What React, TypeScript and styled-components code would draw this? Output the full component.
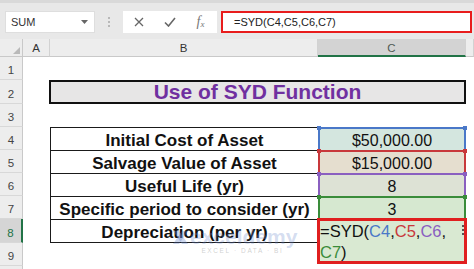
import React from "react";
import styled, { createGlobalStyle } from "styled-components";

const Global = createGlobalStyle`
  html, body { margin: 0; padding: 0; background: #fff; }
  body {
    width: 474px; height: 269px; overflow: hidden;
    font-family: "Liberation Sans", Arial, sans-serif;
  }
  #root { width: 474px; height: 269px; }
`;

const Page = styled.div`
  width: 474px;
  height: 269px;
  display: flex;
  flex-direction: column;
  position: relative;
  overflow: hidden;
`;

/* ---------- formula bar ---------- */

const Toolbar = styled.div`
  flex: none;
  height: 39px;
  box-sizing: border-box;
  background: #e8e8e8;
  border-top: 3px solid #d9d9d9;
  display: flex;
  align-items: center;
  padding: 2px 2px 0 5px;
`;

const NameBox = styled.div`
  width: 90px;
  height: 22px;
  box-sizing: border-box;
  background: #fff;
  border: 1px solid #dedede;
  display: flex;
  align-items: center;
  justify-content: space-between;
  padding: 0 6px 0 5px;
  font-size: 11px;
  color: #333;
`;

const Grip = styled.div`
  width: 28px;
  display: flex;
  flex-direction: column;
  align-items: center;
  gap: 2px;
  span {
    width: 2px;
    height: 2px;
    background: #a8a8a8;
    border-radius: 1px;
  }
`;

const FxGroup = styled.div`
  width: 94px;
  height: 22px;
  background: #fff;
  display: grid;
  grid-template-columns: repeat(3, 31px);
  align-items: center;
  justify-items: center;
  margin-right: 4px;
  color: #666;
`;

const FxText = styled.span`
  font-family: "Liberation Serif", "Times New Roman", serif;
  font-style: italic;
  font-size: 14px;
  color: #777;
  sub {
    font-size: 9px;
    vertical-align: -1px;
  }
`;

const FormulaInput = styled.div`
  flex: 1;
  height: 22px;
  box-sizing: border-box;
  background: #fff;
  border: 2px solid #e81c1c;
  display: flex;
  align-items: center;
  padding-left: 11px;
  font-size: 11px;
  color: #222;
`;

/* ---------- sheet ---------- */

const Sheet = styled.div`
  flex: 1;
  display: grid;
  grid-template-columns: 23px 27px 268px 148px 1fr;
  grid-template-rows: 18px 23px 24px 23px 23px 23px 23px 23px 24px 23px 1fr;
  background: #fff;
`;

const Corner = styled.div`
  background: #ededed;
  border-right: 1px solid #c9c9c9;
  border-bottom: 1px solid #c9c9c9;
  box-sizing: border-box;
  display: flex;
  align-items: flex-end;
  justify-content: flex-end;
  padding: 0 2px 2px 0;
`;

const ColHeader = styled.div<{ $selected?: boolean }>`
  box-sizing: border-box;
  background: ${(p) => (p.$selected ? "#d3d3d3" : "#ededed")};
  border-right: 1px solid #d2d2d2;
  border-bottom: ${(p) => (p.$selected ? "2px solid #217346" : "1px solid #c9c9c9")};
  display: flex;
  align-items: center;
  justify-content: center;
  font-size: 11.5px;
  color: ${(p) => (p.$selected ? "#4f5a54" : "#333")};
  padding-top: ${(p) => (p.$selected ? "1px" : "0")};
`;

const RowHead = styled.div<{ $selected?: boolean }>`
  box-sizing: border-box;
  background: ${(p) => (p.$selected ? "#d5d5d5" : "#ededed")};
  border-right: ${(p) => (p.$selected ? "2px solid #217346" : "1px solid #c9c9c9")};
  border-bottom: 1px solid #d8d8d8;
  display: flex;
  align-items: flex-end;
  justify-content: center;
  padding-bottom: 3px;
  font-size: 11.5px;
  line-height: 11px;
  color: ${(p) => (p.$selected ? "#217346" : "#444")};
`;

const Blank = styled.div``;

const Title = styled.div`
  grid-column: span 2;
  box-sizing: border-box;
  margin: 0 0 0 -1px;
  border: 2px solid #111;
  background: #e7e6e6;
  display: flex;
  align-items: center;
  justify-content: center;
  font-size: 21px;
  font-weight: bold;
  color: #7030a0;
`;

const Label = styled.div<{ $last?: boolean }>`
  box-sizing: border-box;
  border-left: 1px solid #1a1a1a;
  border-top: 1px solid #1a1a1a;
  border-bottom: ${(p) => (p.$last ? "1px solid #1a1a1a" : "none")};
  display: flex;
  align-items: flex-end;
  justify-content: center;
  padding-bottom: 1px;
  font-size: 17px;
  line-height: 17px;
  font-weight: bold;
  color: #111;
  white-space: nowrap;
`;

const Value = styled.div<{ $line: string; $fill: string }>`
  position: relative;
  box-sizing: border-box;
  background: ${(p) => p.$fill};
  border: 2px solid ${(p) => p.$line};
  border-bottom: none;
  display: flex;
  align-items: flex-end;
  justify-content: center;
  padding-bottom: 1px;
  font-size: 16px;
  line-height: 16px;
  color: #111;
  &::before,
  &::after {
    content: "";
    position: absolute;
    top: -3px;
    width: 4px;
    height: 4px;
    background: ${(p) => p.$line};
  }
  &::before { left: -3px; }
  &::after { right: -3px; }
`;

const EditCell = styled.div`
  position: relative;
`;

const EditBox = styled.div`
  position: absolute;
  z-index: 2;
  top: -1px;
  left: -1px;
  width: 150px;
  height: 46px;
  box-sizing: border-box;
  border: 3px solid #e01f1f;
  background: #d9e9d2;
  padding-left: 0;
  font-size: 16.5px;
  line-height: 21px;
  color: #111;
`;

const EditLine = styled.div`
  white-space: nowrap;
`;

const Ref = styled.span<{ $c: string }>`
  color: ${(p) => p.$c};
`;

const Caret = styled.div`
  position: absolute;
  right: 0px;
  top: 4px;
  height: 10px;
  border-left: 2px dotted #555;
`;

/* ---------- watermark ---------- */

const Watermark = styled.div`
  position: absolute;
  left: 172px;
  top: 226px;
  display: flex;
  flex-direction: column;
  align-items: flex-end;
  pointer-events: none;
  z-index: 1;
`;

const Brand = styled.div`
  display: flex;
  align-items: center;
  gap: 1px;
  font-size: 21px;
  font-weight: bold;
  color: rgba(110, 140, 205, 0.3);
  line-height: 22px;
`;

const Tagline = styled.div`
  font-size: 6.5px;
  letter-spacing: 1.6px;
  color: rgba(150, 150, 150, 0.45);
  margin-top: -1px;
  margin-right: 14px;
`;

const blue = "#4a78c8";
const red = "#c8383b";
const purple = "#8a5fc0";
const green = "#3a8c3a";

const rows = [
  { n: 4, label: "Initial Cost of Asset", value: "$50,000.00", line: blue, fill: "#d4e6df" },
  { n: 5, label: "Salvage Value of Asset", value: "$15,000.00", line: red, fill: "#e5decf" },
  { n: 6, label: "Useful Life (yr)", value: "8", line: purple, fill: "#dde2d5" },
  { n: 7, label: "Specific period to consider (yr)", value: "3", line: green, fill: "#d6e8d0" },
];

const CancelIcon = () => (
  <svg width="10" height="10" viewBox="0 0 10 10">
    <path d="M1 1 L9 9 M9 1 L1 9" stroke="#666" strokeWidth="1.3" fill="none" />
  </svg>
);

const EnterIcon = () => (
  <svg width="12" height="10" viewBox="0 0 12 10">
    <path d="M1 5.5 L4.5 9 L11 1" stroke="#666" strokeWidth="1.6" fill="none" />
  </svg>
);

const DropArrow = () => (
  <svg width="7" height="4" viewBox="0 0 7 4">
    <path d="M0 0 H7 L3.5 4 Z" fill="#666" />
  </svg>
);

const CornerTriangle = () => (
  <svg width="7" height="7" viewBox="0 0 7 7">
    <path d="M7 0 V7 H0 Z" fill="#b9b9b9" />
  </svg>
);

const LogoMark = () => (
  <svg width="17" height="17" viewBox="0 0 17 17">
    <path d="M1 2 L7 2 L16 15 L10 15 Z" fill="rgba(110,140,205,0.35)" />
    <path d="M16 2 L10 2 L1 15 L7 15 Z" fill="rgba(90,120,190,0.3)" />
  </svg>
);

export default function App() {
  return (
    <Page>
      <Global />
      <Toolbar>
        <NameBox>
          <span>SUM</span>
          <DropArrow />
        </NameBox>
        <Grip>
          <span />
          <span />
          <span />
        </Grip>
        <FxGroup>
          <CancelIcon />
          <EnterIcon />
          <FxText>
            f<sub>x</sub>
          </FxText>
        </FxGroup>
        <FormulaInput>=SYD(C4,C5,C6,C7)</FormulaInput>
      </Toolbar>

      <Sheet>
        <Corner>
          <CornerTriangle />
        </Corner>
        <ColHeader>A</ColHeader>
        <ColHeader>B</ColHeader>
        <ColHeader $selected>C</ColHeader>
        <ColHeader />

        <RowHead>1</RowHead>
        <Blank />
        <Blank />
        <Blank />
        <Blank />

        <RowHead>2</RowHead>
        <Blank />
        <Title>Use of SYD Function</Title>
        <Blank />

        <RowHead>3</RowHead>
        <Blank />
        <Blank />
        <Blank />
        <Blank />

        {rows.map((r) => (
          <React.Fragment key={r.n}>
            <RowHead>{r.n}</RowHead>
            <Blank />
            <Label>{r.label}</Label>
            <Value $line={r.line} $fill={r.fill}>
              {r.value}
            </Value>
            <Blank />
          </React.Fragment>
        ))}

        <RowHead $selected>8</RowHead>
        <Blank />
        <Label $last>Depreciation (per yr)</Label>
        <EditCell>
          <EditBox>
            <EditLine>
              =SYD(<Ref $c={blue}>C4</Ref>,<Ref $c={red}>C5</Ref>,<Ref $c={purple}>C6</Ref>,
            </EditLine>
            <EditLine>
              <Ref $c={green}>C7</Ref>)
            </EditLine>
            <Caret />
          </EditBox>
        </EditCell>
        <Blank />

        <RowHead>9</RowHead>
        <Blank />
        <Blank />
        <Blank />
        <Blank />

        <RowHead />
        <Blank />
        <Blank />
        <Blank />
        <Blank />
      </Sheet>

      <Watermark>
        <Brand>
          <LogoMark />
          exceldemy
        </Brand>
        <Tagline>EXCEL · DATA · BI</Tagline>
      </Watermark>
    </Page>
  );
}
